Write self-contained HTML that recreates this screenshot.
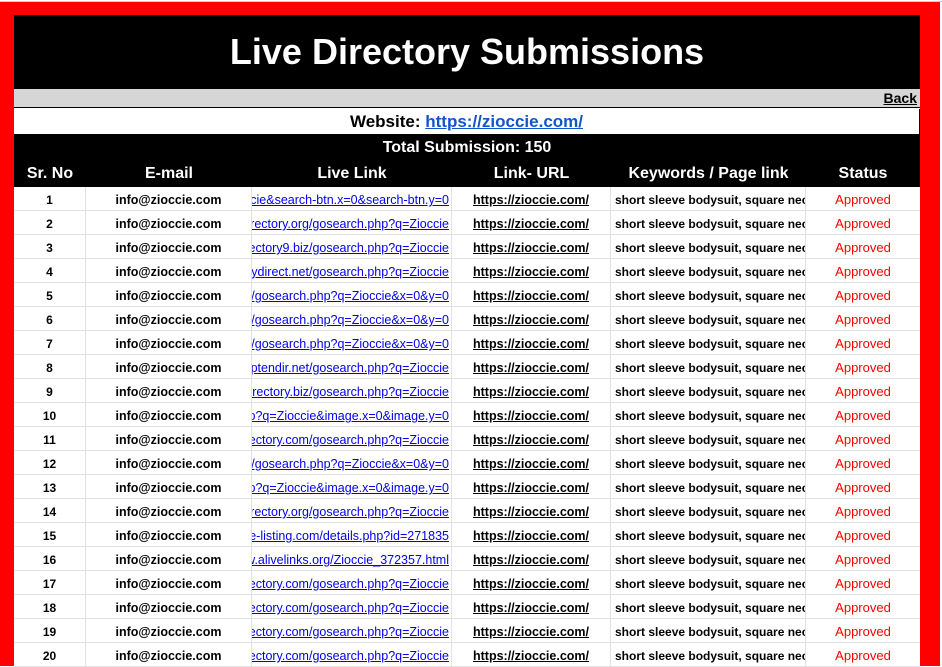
<!DOCTYPE html>
<html><head><meta charset="utf-8"><style>
*{margin:0;padding:0;box-sizing:border-box}
body{width:942px;height:666px;overflow:hidden;background:#fff;font-family:"Liberation Sans",Arial,sans-serif;position:relative}
.gl{position:absolute;left:0;right:0;top:1px;height:1px;background:#ccc}
.red{position:absolute;background:#f00}
.title{position:absolute;left:14px;top:15px;width:906px;height:74px;background:#000;color:#fff;font-size:36px;font-weight:bold;text-align:center;line-height:74px}
.gray{position:absolute;left:14px;top:89px;width:906px;height:19px;background:#d6d6d6;border-bottom:1px solid #000}
.gray a{position:absolute;right:3px;top:0;font-size:14px;font-weight:bold;color:#000;text-decoration:underline;line-height:18px}
.web{position:absolute;left:14px;top:109px;width:906px;height:25px;background:#fff;text-align:center;font-size:17px;font-weight:bold;line-height:25px;border-right:1px solid #000}
.web a{color:#1155cc;text-decoration:underline}
.hdr{position:absolute;left:14px;top:134px;width:906px;height:53px;background:#000;color:#fff;font-weight:bold;font-size:16px}
.hdr .t{position:absolute;left:0;width:906px;top:5px;text-align:center;font-size:16px}
.hdr .c{position:absolute;top:31px;text-align:center}
.rows{position:absolute;left:14px;top:187px;width:906px}
.r{height:24px;position:relative;border-bottom:1px solid #e2e2e2;font-size:13px;font-weight:bold}
.r>div{position:absolute;top:0;height:24px;line-height:26px;border-right:1px solid #e2e2e2;overflow:hidden;white-space:nowrap}
.c1{left:0;width:72px;text-align:center;font-size:12px}
.c2{left:72px;width:166px;text-align:center;font-size:12.5px}
.c3{left:238px;width:200px;display:flex;justify-content:flex-end;font-weight:normal;color:#0000ee;text-decoration:underline;font-size:12.5px}
.c3 span{flex:none;padding-right:2px}
.c4{left:438px;width:159px;text-align:center;text-decoration:underline;font-size:12.5px}
.c5{left:597px;width:195px;padding-left:4px;font-size:12px}
.c6{left:792px;width:114px;text-align:center;color:#f00;font-weight:normal;font-size:13px;border-right:none!important}
</style></head><body>
<div class="gl"></div>
<div class="red" style="left:0;top:2px;width:14px;height:664px"></div>
<div class="red" style="left:0;top:2px;width:940px;height:13px"></div>
<div class="red" style="left:920px;top:2px;width:20px;height:664px"></div>
<div class="title">Live Directory Submissions</div>
<div class="gray"><a>Back</a></div>
<div class="web">Website: <a>https://zioccie.com/</a></div>
<div class="hdr"><div class="t">Total Submission: 150</div>
<div class="c" style="left:0;width:72px">Sr. No</div>
<div class="c" style="left:72px;width:166px">E-mail</div>
<div class="c" style="left:238px;width:200px">Live Link</div>
<div class="c" style="left:438px;width:159px">Link- URL</div>
<div class="c" style="left:597px;width:195px">Keywords / Page link</div>
<div class="c" style="left:792px;width:114px">Status</div>
</div>
<div class="rows" id="rows"></div>
<script>
var L=["ccie&search-btn.x=0&search-btn.y=0","directory.org/gosearch.php?q=Zioccie","rectory9.biz/gosearch.php?q=Zioccie","orydirect.net/gosearch.php?q=Zioccie","g/gosearch.php?q=Zioccie&x=0&y=0","et/gosearch.php?q=Zioccie&x=0&y=0","/gosearch.php?q=Zioccie&x=0&y=0","toptendir.net/gosearch.php?q=Zioccie","directory.biz/gosearch.php?q=Zioccie","hp?q=Zioccie&image.x=0&image.y=0","irectory.com/gosearch.php?q=Zioccie","g/gosearch.php?q=Zioccie&x=0&y=0","hp?q=Zioccie&image.x=0&image.y=0","directory.org/gosearch.php?q=Zioccie","ue-listing.com/details.php?id=271835","w.alivelinks.org/Zioccie_372357.html","irectory.com/gosearch.php?q=Zioccie","irectory.com/gosearch.php?q=Zioccie","irectory.com/gosearch.php?q=Zioccie","irectory.com/gosearch.php?q=Zioccie"];
var h="";for(var i=0;i<20;i++){h+='<div class="r"><div class="c1">'+(i+1)+'</div><div class="c2">info@zioccie.com</div><div class="c3"><span>'+L[i]+'</span></div><div class="c4">https://zioccie.com/</div><div class="c5">short sleeve bodysuit, square neck</div><div class="c6">Approved</div></div>';}
document.getElementById("rows").innerHTML=h;
</script>
</body></html>
